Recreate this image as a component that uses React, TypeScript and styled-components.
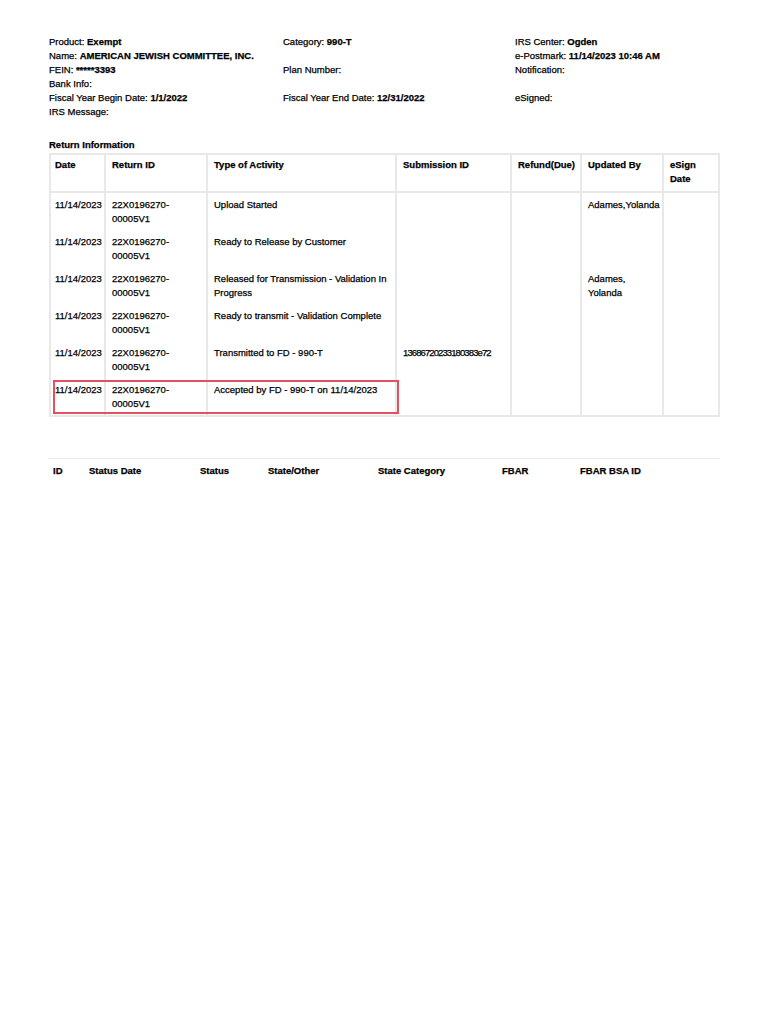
import React from "react";
import styled, { createGlobalStyle } from "styled-components";

const GlobalStyle = createGlobalStyle`
  html, body { margin: 0; padding: 0; background: #fff; }
  body { font-family: "Liberation Sans", Arial, sans-serif; color: #000; }
`;

const Page = styled.div`
  width: 770px;
  min-height: 1024px;
  box-sizing: border-box;
  padding: 35px 50px 0 49px;
  font-size: 9.5px;
  -webkit-text-stroke: 0.25px #000;
`;

const InfoGrid = styled.div`
  display: grid;
  grid-template-columns: 234px 232px 205px;
  grid-auto-rows: 14px;
  line-height: 14px;
`;

const InfoItem = styled.div`
  white-space: nowrap;
`;

const Value = styled.b`
  font-weight: 700;
`;

const SectionTitle = styled.div`
  margin-top: 19px;
  font-weight: 700;
  line-height: 14px;
  margin-bottom: 1px;
`;

const Table = styled.div`
  display: grid;
  grid-template-columns: 57px 102px 189px 115px 70px 82px 56px;
  grid-template-rows: 38px;
  grid-auto-rows: 37px;
  width: 671px;
  border-top: 2px solid #e8e8e8;
  border-bottom: 2px solid #e8e8e8;
  box-sizing: border-box;
`;

const HeadCell = styled.div<{ $col: number }>`
  grid-row: 1;
  grid-column: ${(p) => p.$col};
  box-sizing: border-box;
  padding: 3px 5px 0 ${(p) => (p.$col === 1 ? 4 : 6)}px;
  font-weight: 700;
  line-height: 13.5px;
  border-right: 2px solid #e8e8e8;
  border-left: ${(p) => (p.$col === 1 ? "2px solid #e8e8e8" : "none")};
  border-bottom: 2px solid #e8e8e8;
  white-space: nowrap;
`;

const Cell = styled.div<{ $row: number; $col: number; $tight?: boolean }>`
  grid-row: ${(p) => p.$row};
  grid-column: ${(p) => p.$col};
  box-sizing: border-box;
  padding: 5px 4px 0 ${(p) => (p.$col === 1 ? 4 : 6)}px;
  line-height: 13.5px;
  white-space: nowrap;
  letter-spacing: ${(p) => (p.$tight ? "-0.9px" : "normal")};
  border-right: 2px solid #e8e8e8;
  border-left: ${(p) => (p.$col === 1 ? "2px solid #e8e8e8" : "none")};
`;

const Highlight = styled.div<{ $row: number }>`
  grid-column: 1 / 4;
  grid-row: ${(p) => p.$row};
  margin: 2px -2px 1px 4px;
  border: 2px solid #e4505f;
  pointer-events: none;
`;

const Divider = styled.div`
  margin-top: 41px;
  width: 672px;
  margin-left: -1px;
  border-top: 1.5px solid #ececec;
`;

const StatusHeader = styled.div`
  display: grid;
  grid-template-columns: 36px 111px 68px 110px 124px 78px 145px;
  margin-left: -1px;
  padding-top: 5px;
  font-weight: 700;
  line-height: 14px;
`;

const StatusLabel = styled.div`
  padding-left: 5px;
  white-space: nowrap;
`;

type Info = [string, string] | null;

const info: Info[] = [
  ["Product: ", "Exempt"],
  ["Category: ", "990-T"],
  ["IRS Center: ", "Ogden"],
  ["Name: ", "AMERICAN JEWISH COMMITTEE, INC."],
  null,
  ["e-Postmark: ", "11/14/2023 10:46 AM"],
  ["FEIN: ", "*****3393"],
  ["Plan Number:", ""],
  ["Notification:", ""],
  ["Bank Info:", ""],
  null,
  null,
  ["Fiscal Year Begin Date: ", "1/1/2022"],
  ["Fiscal Year End Date: ", "12/31/2022"],
  ["eSigned:", ""],
  ["IRS Message:", ""],
  null,
  null,
];

const headers: React.ReactNode[] = [
  "Date",
  "Return ID",
  "Type of Activity",
  "Submission ID",
  "Refund(Due)",
  "Updated By",
  <>
    eSign
    <br />
    Date
  </>,
];

const returnId = (
  <>
    22X0196270-
    <br />
    00005V1
  </>
);

const SUBMISSION = "13686720233180383e72";

const rows: React.ReactNode[][] = [
  ["11/14/2023", returnId, "Upload Started", "", "", "Adames,Yolanda", ""],
  ["11/14/2023", returnId, "Ready to Release by Customer", "", "", "", ""],
  [
    "11/14/2023",
    returnId,
    <>
      Released for Transmission - Validation In
      <br />
      Progress
    </>,
    "",
    "",
    <>
      Adames,
      <br />
      Yolanda
    </>,
    "",
  ],
  ["11/14/2023", returnId, "Ready to transmit - Validation Complete", "", "", "", ""],
  ["11/14/2023", returnId, "Transmitted to FD - 990-T", SUBMISSION, "", "", ""],
  ["11/14/2023", returnId, "Accepted by FD - 990-T on 11/14/2023", "", "", "", ""],
];

const statusCols = [
  "ID",
  "Status Date",
  "Status",
  "State/Other",
  "State Category",
  "FBAR",
  "FBAR BSA ID",
];

export default function App() {
  return (
    <>
      <GlobalStyle />
      <Page>
        <InfoGrid>
          {info.map((it, i) => (
            <InfoItem key={i}>
              {it ? (
                <>
                  {it[0]}
                  {it[1] && <Value>{it[1]}</Value>}
                </>
              ) : null}
            </InfoItem>
          ))}
        </InfoGrid>

        <SectionTitle>Return Information</SectionTitle>
        <Table>
          {headers.map((h, i) => (
            <HeadCell key={i} $col={i + 1}>
              {h}
            </HeadCell>
          ))}
          {rows.map((r, ri) =>
            r.map((c, ci) => (
              <Cell
                key={`${ri}-${ci}`}
                $row={ri + 2}
                $col={ci + 1}
                $tight={c === SUBMISSION}
              >
                {c}
              </Cell>
            ))
          )}
          <Highlight $row={rows.length + 1} />
        </Table>

        <Divider />
        <StatusHeader>
          {statusCols.map((s) => (
            <StatusLabel key={s}>{s}</StatusLabel>
          ))}
        </StatusHeader>
      </Page>
    </>
  );
}
